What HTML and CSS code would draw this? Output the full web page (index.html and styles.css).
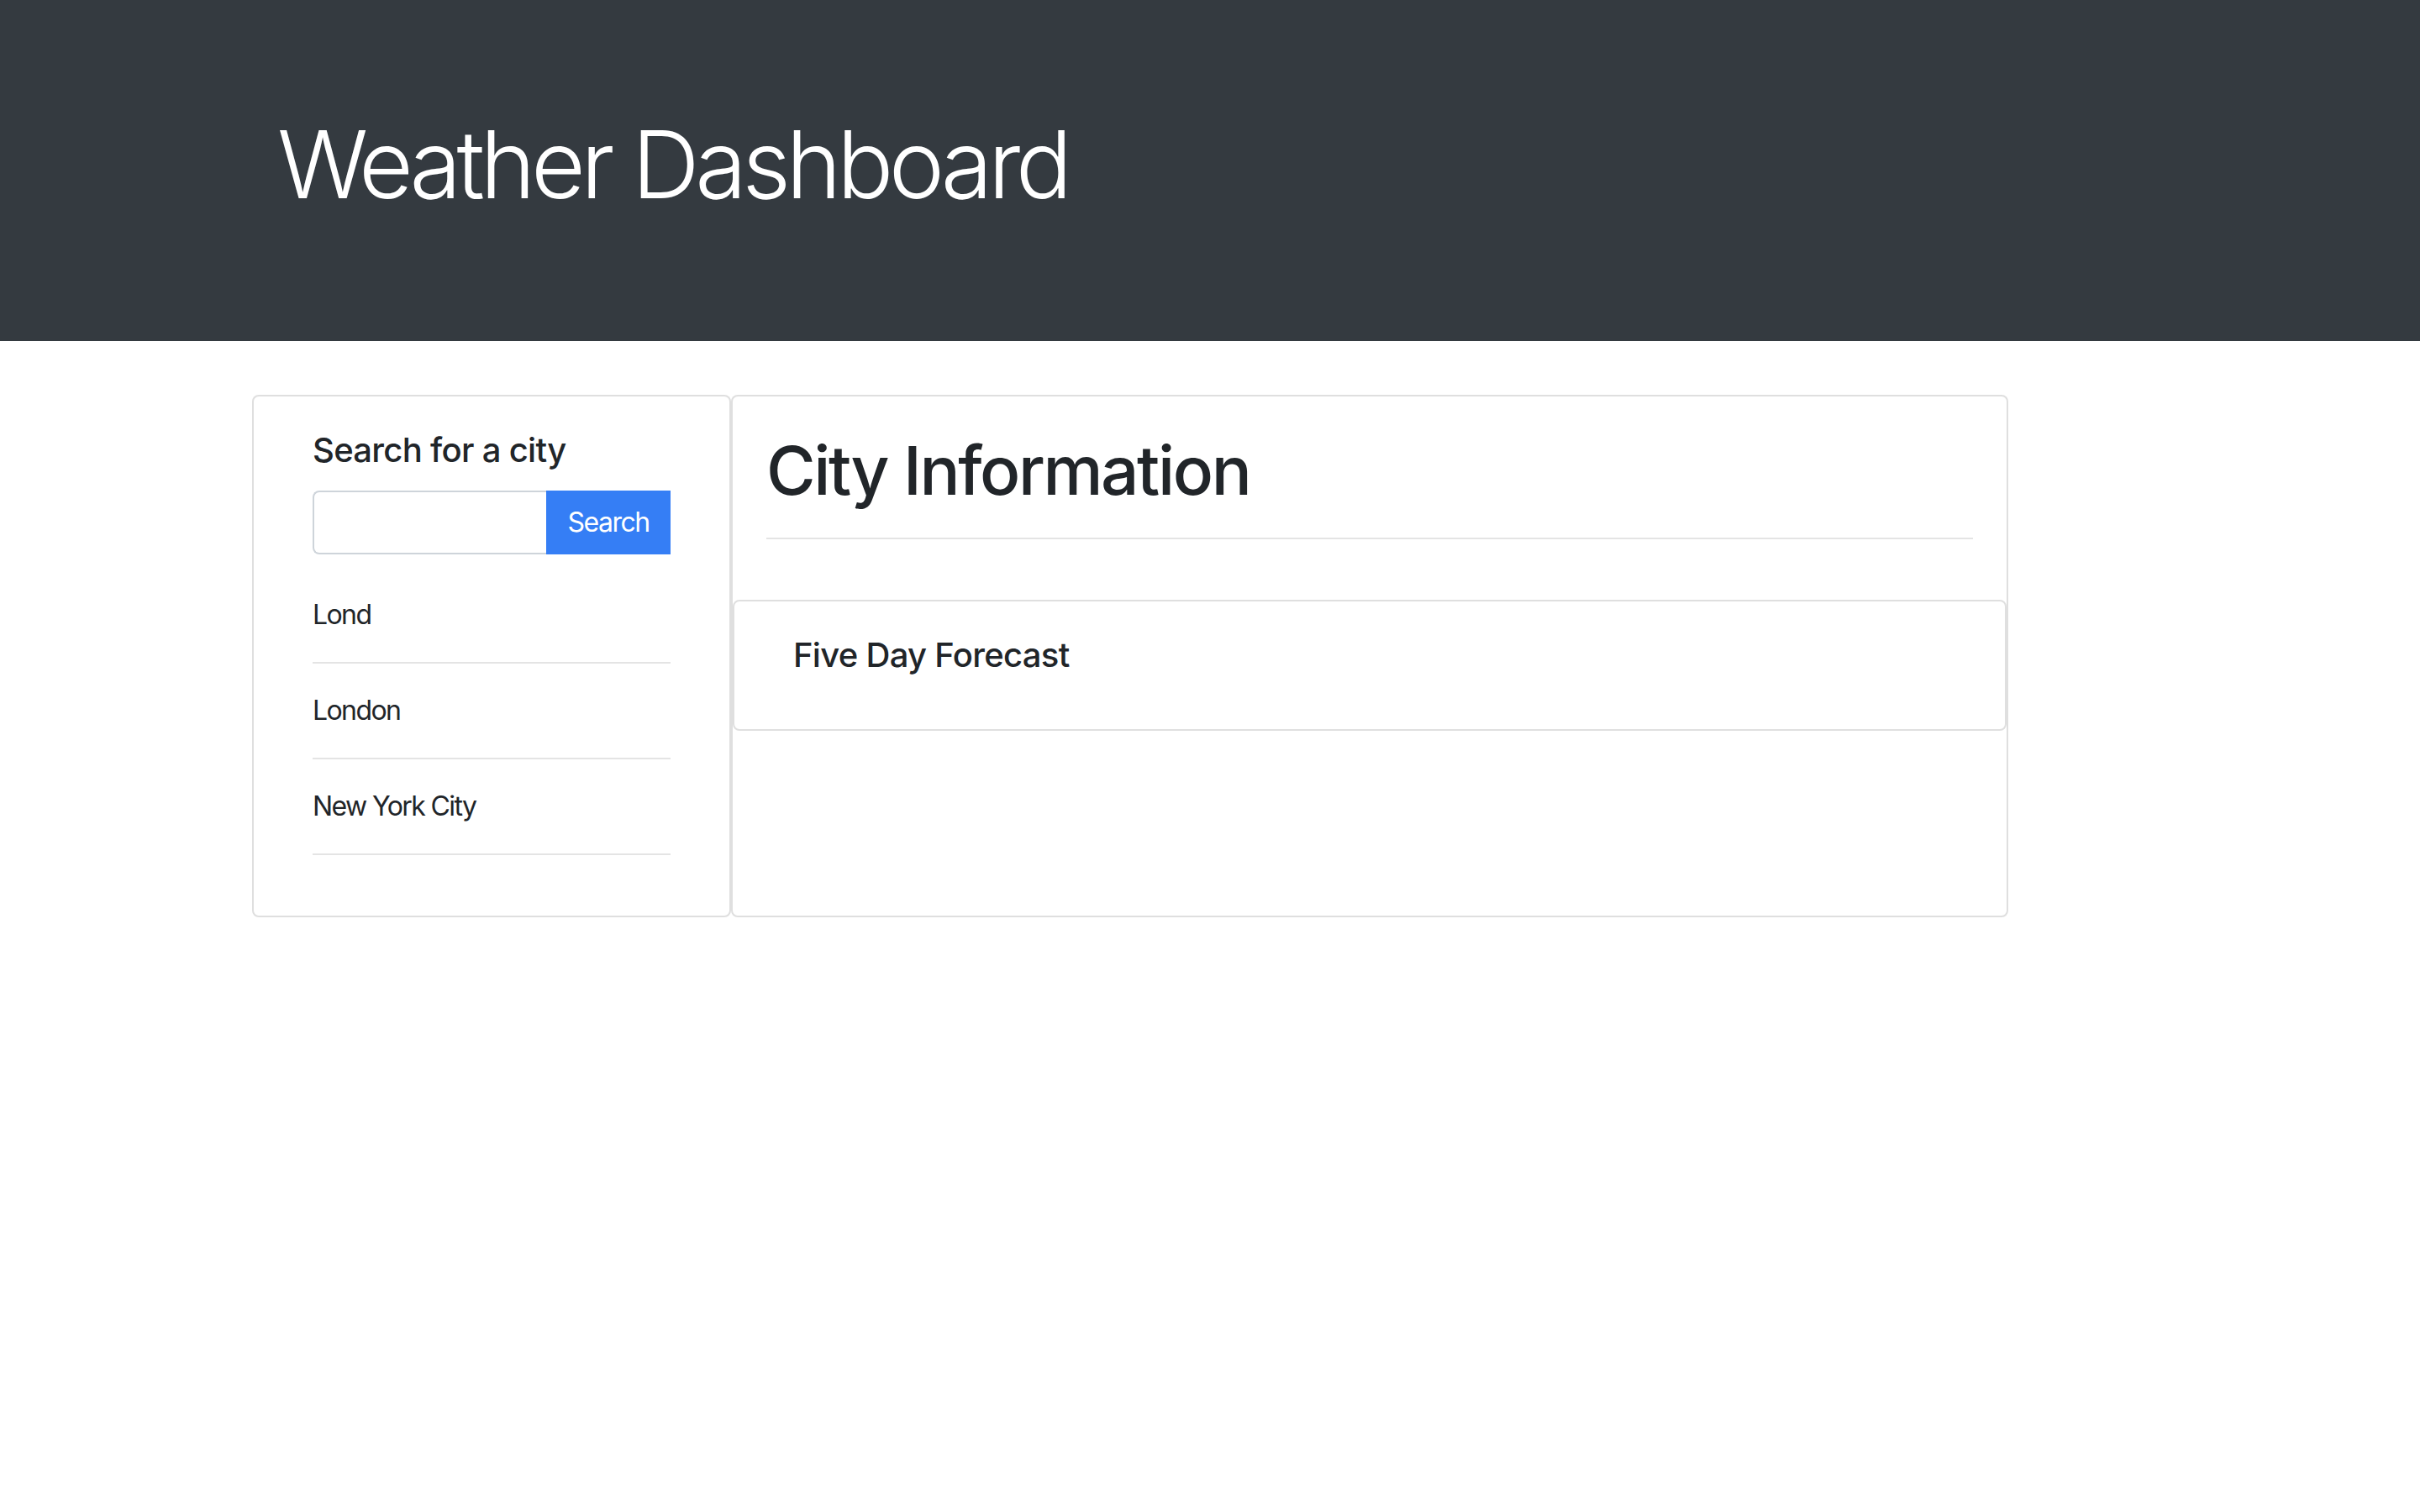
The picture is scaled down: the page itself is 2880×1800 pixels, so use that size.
FILE: index.html
```html
<!DOCTYPE html>
<html lang="en">
<head>
<meta charset="utf-8">
<title>Weather Dashboard</title>
<link rel="stylesheet" href="styles.css">
</head>
<body>
<header class="hero">
  <div class="hero-inner">
    <h1 class="hero-title">Weather Dashboard</h1>
  </div>
</header>
<main class="page">
  <div class="row">
    <section class="card sidebar">
      <div class="card-body">
        <h5 class="card-title">Search for a city</h5>
        <form class="input-group">
          <input class="form-control" type="text" aria-label="City">
          <button class="btn-search" type="button">Search</button>
        </form>
        <ul class="history">
          <li>Lond</li>
          <li>London</li>
          <li>New York City</li>
        </ul>
      </div>
    </section>
    <section class="card main-card">
      <div class="card-body">
        <h1 class="city-title">City Information</h1>
        <hr class="divider">
      </div>
      <div class="forecast">
        <div class="forecast-body">
          <h5 class="card-title">Five Day Forecast</h5>
        </div>
      </div>
    </section>
  </div>
</main>
</body>
</html>
```
FILE: styles.css
```css
* { box-sizing: border-box; }

html, body {
  margin: 0;
  padding: 0;
  background: #ffffff;
}

body {
  font-family: Inter, "Noto Sans", "Liberation Sans", sans-serif;
  color: #212529;
  font-size: 32px;
  line-height: 48px;
}

.hero {
  background: #343a40;
  color: #ffffff;
  padding: 128px 0;
}

.hero-inner {
  width: 2280px;
  margin: 0 auto;
  padding: 0 30px;
}

.hero-title {
  margin: 0 0 16px;
  font-size: 112px;
  font-weight: 300;
  line-height: 1.2;
  letter-spacing: -5.5px;
}

.page {
  width: 2280px;
  margin: 64px auto 0;
}

.row {
  display: flex;
  align-items: stretch;
}

.card {
  border: 2px solid rgba(0, 0, 0, 0.125);
  border-radius: 8px;
  background: #ffffff;
}

.sidebar {
  flex: 0 0 570px;
  width: 570px;
  min-width: 0;
  padding: 0 30px;
}

.main-card {
  flex: 0 0 1520px;
  width: 1520px;
  min-width: 0;
  display: flex;
  flex-direction: column;
}

.card-body {
  padding: 40px;
}

.card-title {
  margin: 0 0 24px;
  font-size: 40px;
  font-weight: 500;
  line-height: 48px;
  letter-spacing: -0.7px;
}

.input-group {
  display: flex;
  width: 100%;
  height: 76px;
  margin: 0;
}

.form-control {
  flex: 1 1 0;
  width: 0;
  min-width: 0;
  height: 76px;
  border: 2px solid #ced4da;
  border-right: 0;
  border-radius: 8px 0 0 8px;
  padding: 12px 24px;
  font-family: inherit;
  font-size: 32px;
  color: #495057;
  background: #ffffff;
  outline: none;
}

.btn-search {
  flex: 0 0 148px;
  width: 148px;
  height: 76px;
  border: 0;
  border-radius: 0;
  padding: 0;
  background: #357ef5;
  color: #ffffff;
  font-family: inherit;
  font-size: 32px;
  line-height: 48px;
  letter-spacing: -1.5px;
}

.history {
  list-style: none;
  margin: 16px 0 32px;
  padding: 0;
}

.history li {
  padding: 32px 0;
  border-bottom: 2px solid #e4e4e4;
  font-size: 32px;
  line-height: 48px;
  letter-spacing: -1.6px;
}

.city-title {
  margin: 0 0 16px;
  font-size: 80px;
  font-weight: 500;
  line-height: 96px;
  letter-spacing: -2.4px;
}

.divider {
  margin: 32px 0;
  border: 0;
  border-top: 2px solid #e4e4e4;
  height: 0;
}

.forecast {
  border: 2px solid rgba(0, 0, 0, 0.125);
  border-radius: 8px;
}

.forecast-body {
  padding: 40px 70px;
}
```
